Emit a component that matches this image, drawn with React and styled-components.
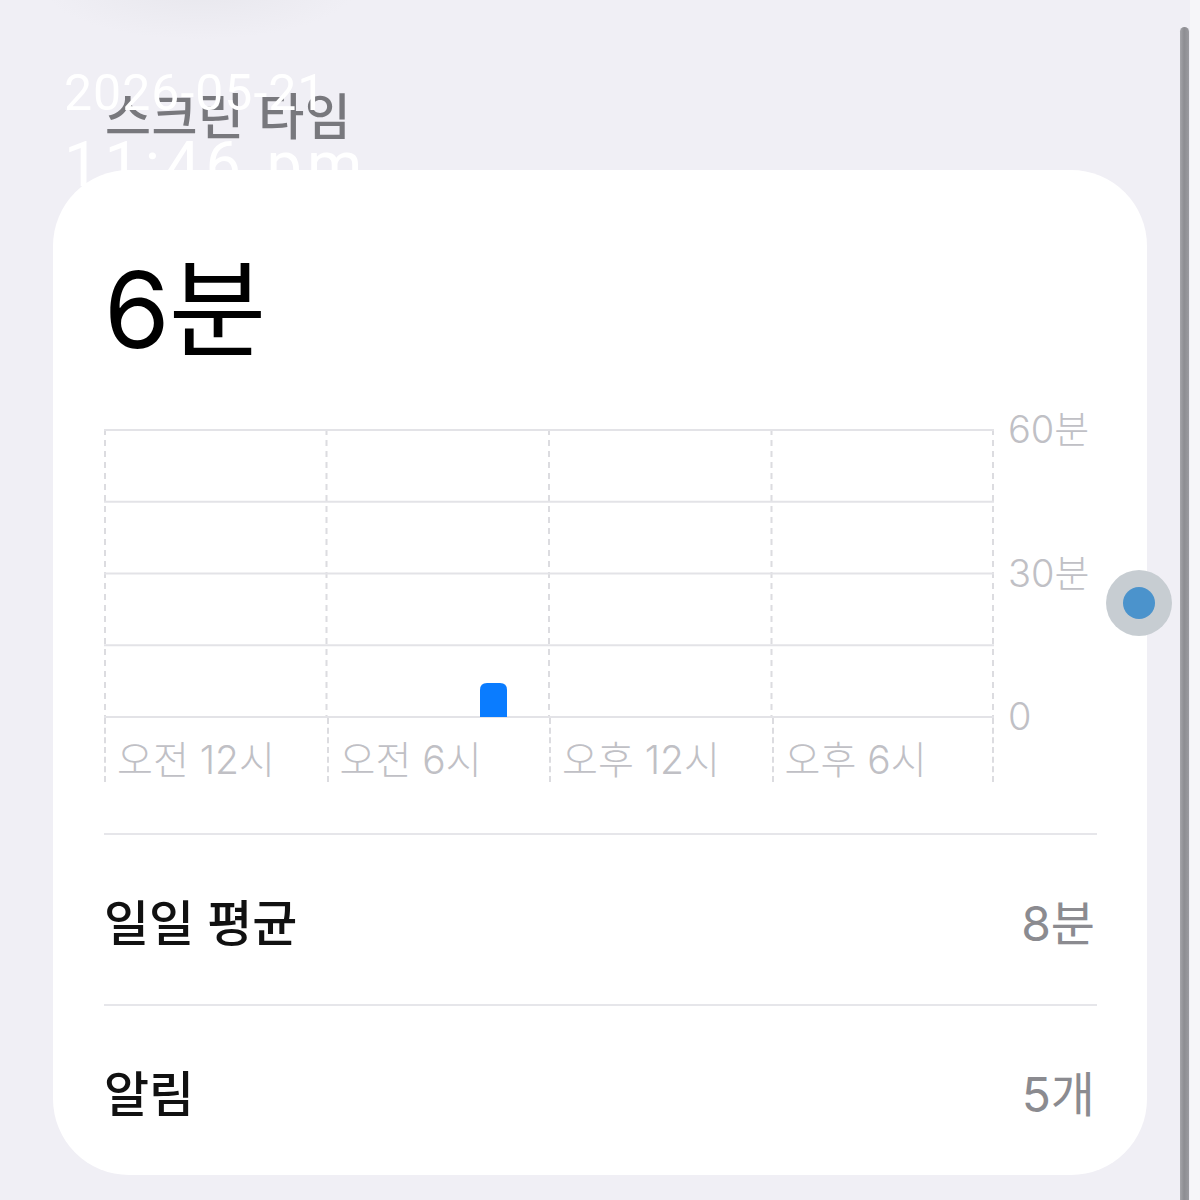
import React from "react";
import styled, { createGlobalStyle } from "styled-components";

const Global = createGlobalStyle`
  html, body { margin: 0; padding: 0; }
  body {
    background: #f0eff5;
    font-family: Inter, "Noto Sans CJK KR", "Noto Sans", sans-serif;
    -webkit-font-smoothing: antialiased;
  }
`;

const Page = styled.div`
  position: relative;
  width: 1200px;
  height: 1200px;
  overflow: hidden;
  background: #f0eff5;
  box-sizing: border-box;
  padding: 0 53px;
  display: flex;
  flex-direction: column;
`;

const TopShade = styled.div`
  position: absolute;
  left: 40px;
  top: -70px;
  width: 320px;
  height: 110px;
  border-radius: 50%;
  background: radial-gradient(ellipse at center, rgba(215,215,221,0.35), rgba(240,239,245,0) 70%);
  pointer-events: none;
`;

const Header = styled.header`
  height: 170px;
  box-sizing: border-box;
  padding: 87px 0 0 52px;
`;

const Title = styled.h1`
  margin: 0;
  font-size: 50px;
  line-height: 60px;
  font-weight: 500;
  letter-spacing: 0.5px;
  color: #78787d;
`;

const Card = styled.section`
  position: relative;
  z-index: 1;
  width: 1094px;
  height: 1005px;
  box-sizing: border-box;
  background: #ffffff;
  border-radius: 76px;
  padding: 88px 50px 0 51px;
  display: flex;
  flex-direction: column;
`;

const Total = styled.div`
  font-size: 106px;
  line-height: 100px;
  font-weight: 400;
  color: #000;
  letter-spacing: -1px;
  margin-top: 2px;
`;

const ChartArea = styled.div`
  margin-top: 69px;
  display: grid;
  grid-template-columns: 890px 1fr;
`;

const Plot = styled.div`
  display: flex;
  flex-direction: column;
`;

const PlotSvg = styled.svg`
  display: block;
  width: 890px;
  height: 289px;
  overflow: visible;
`;

const XLabels = styled.div`
  display: grid;
  grid-template-columns: repeat(4, 1fr);
  height: 63px;
`;

const XLabel = styled.div`
  border-left: 2px dashed #dcdce0;
  border-right: ${(p) => (p.$last ? "2px dashed #dcdce0" : "none")};
  padding: 20px 0 0 11px;
  font-size: 39px;
  line-height: 44px;
  font-weight: 300;
  color: #c0c0c5;
  white-space: nowrap;
`;

const YAxis = styled.div`
  margin-top: -20px;
  height: 327px;
  padding-left: 14px;
  display: flex;
  flex-direction: column;
  justify-content: space-between;
`;

const YLabel = styled.div`
  font-size: 38px;
  line-height: 40px;
  font-weight: 300;
  color: #c0c0c5;
  white-space: nowrap;
`;

const Rows = styled.div`
  margin-top: 52px;
  display: flex;
  flex-direction: column;
`;

const Row = styled.div`
  height: 171px;
  border-top: 2px solid #e6e6ea;
  display: flex;
  align-items: center;
  justify-content: space-between;
  box-sizing: border-box;
`;

const RowLabel = styled.span`
  font-size: 49px;
  font-weight: 500;
  color: #111;
`;

const RowValue = styled.span`
  font-size: 48px;
  font-weight: 400;
  color: #8b8b90;
  margin-right: 2px;
`;

const Stamp = styled.div`
  position: absolute;
  left: 64px;
  top: 66px;
  z-index: 0;
  color: #ffffff;
  font-family: Roboto, Inter, sans-serif;
  font-weight: 400;
  pointer-events: none;
`;

const StampDate = styled.div`
  font-size: 50px;
  line-height: 54px;
  letter-spacing: 1px;
`;

const StampTime = styled.div`
  margin-top: 12px;
  font-size: 63px;
  line-height: 66px;
  letter-spacing: 5px;
`;

const ScrollTrack = styled.div`
  position: absolute;
  left: 1190px;
  top: 0;
  width: 10px;
  height: 1200px;
  background: #f6f6f9;
`;

const ScrollThumb = styled.div`
  position: absolute;
  left: 1180px;
  top: 27px;
  width: 9px;
  height: 1200px;
  border-radius: 5px;
  background: linear-gradient(90deg, #a5a5aa 0%, #8d8d92 45%, #9a9a9f 100%);
`;

const Handle = styled.div`
  position: absolute;
  left: 1106px;
  top: 570px;
  width: 66px;
  height: 66px;
  border-radius: 50%;
  background: rgba(196, 202, 208, 0.95);
  display: flex;
  align-items: center;
  justify-content: center;
  z-index: 2;
`;

const HandleDot = styled.div`
  width: 32px;
  height: 32px;
  border-radius: 50%;
  background: #4b93cc;
`;

const hLines = [0, 71.75, 143.5, 215.25, 287];
const vLines = [1, 222.5, 445, 667.5, 889];

function Chart() {
  return (
    <ChartArea>
      <Plot>
        <PlotSvg viewBox="0 0 890 289">
          {vLines.map((x, i) => (
            <line
              key={"v" + i}
              x1={x}
              x2={x}
              y1="0"
              y2="289"
              stroke="#dcdce0"
              strokeWidth="2"
              strokeDasharray="6 5"
            />
          ))}
          {hLines.map((y, i) => (
            <line
              key={"h" + i}
              x1="0"
              x2="890"
              y1={y + 1}
              y2={y + 1}
              stroke="#e3e3e7"
              strokeWidth="2"
            />
          ))}
          <path
            d="M376 288 V261 Q376 254 383 254 H396 Q403 254 403 261 V288 Z"
            fill="#0a7cff"
          />
        </PlotSvg>
        <XLabels>
          {["오전 12시", "오전 6시", "오후 12시", "오후 6시"].map((t, i) => (
            <XLabel key={t} $last={i === 3}>
              {t}
            </XLabel>
          ))}
        </XLabels>
      </Plot>
      <YAxis>
        <YLabel>60분</YLabel>
        <YLabel>30분</YLabel>
        <YLabel>0</YLabel>
      </YAxis>
    </ChartArea>
  );
}

export default function App() {
  return (
    <>
      <Global />
      <Page>
        <TopShade />
        <Stamp>
          <StampDate>2026-05-21</StampDate>
          <StampTime>11:46 pm</StampTime>
        </Stamp>
        <Header>
          <Title>스크린 타임</Title>
        </Header>
        <Card>
          <Total>6분</Total>
          <Chart />
          <Rows>
            <Row>
              <RowLabel>일일 평균</RowLabel>
              <RowValue>8분</RowValue>
            </Row>
            <Row>
              <RowLabel>알림</RowLabel>
              <RowValue>5개</RowValue>
            </Row>
          </Rows>
        </Card>
        <Handle>
          <HandleDot />
        </Handle>
        <ScrollTrack />
        <ScrollThumb />
      </Page>
    </>
  );
}
